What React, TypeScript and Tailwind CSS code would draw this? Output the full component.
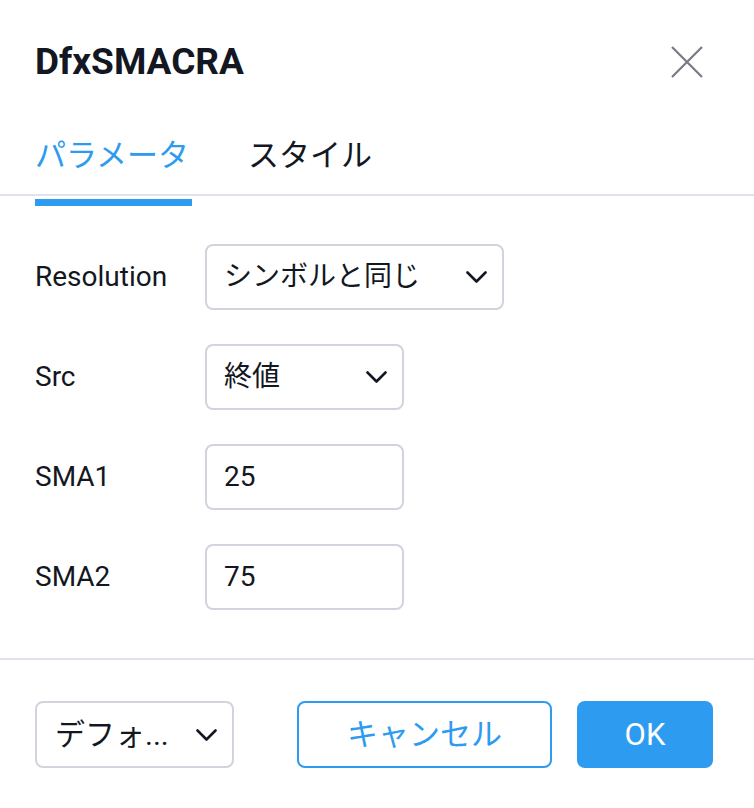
import { ReactNode } from 'react';

const FONT = "font-[family-name:Roboto,'Noto_Sans_CJK_JP',sans-serif]";

function Chevron() {
    return (
        <svg width="21" height="12" viewBox="0 0 21 12" fill="none" className="shrink-0">
            <path d="M1.5 1.5l9 9 9-9" stroke="#131722" strokeWidth="2.6" strokeLinecap="round" strokeLinejoin="round" />
        </svg>
    );
}

function SelectBox({ value, width }: { value: string; width: string }) {
    return (
        <div className={`${width} h-[66px] rounded-[8px] border-2 border-[#d1d4dc] flex items-center justify-between pl-[17px] pr-[15px]`}>
            <span className="text-[28px] text-[#131722] leading-normal whitespace-nowrap">{value}</span>
            <Chevron />
        </div>
    );
}

function InputBox({ value }: { value: string }) {
    return (
        <div className="w-[199px] h-[66px] rounded-[8px] border-2 border-[#d1d4dc] flex items-center pl-[17px]">
            <span className="text-[28px] text-[#131722] leading-normal">{value}</span>
        </div>
    );
}

function Row({ label, children }: { label: string; children: ReactNode }) {
    return (
        <div className="flex items-center">
            <div className="w-[170px] text-[28px] text-[#131722] leading-normal">{label}</div>
            {children}
        </div>
    );
}

export default function App() {
    return (
        <div className={`w-[754px] h-[808px] bg-white flex flex-col ${FONT}`}>
            {/* Header */}
            <div className="flex items-center justify-between pl-[35px] pr-[51px] pt-[43px]">
                <h1 className="text-[37px] font-bold text-[#131722] leading-none">DfxSMACRA</h1>
                <svg width="32" height="32" viewBox="0 0 32 32" fill="none">
                    <path d="M1 1l30 30M31 1L1 31" stroke="#787b86" strokeWidth="2.2" />
                </svg>
            </div>

            {/* Tabs */}
            <div className="flex gap-[59px] pl-[35px] mt-[60px] h-[54px]">
                <span className="text-[31px] leading-none text-[#2d9bf0]">パラメータ</span>
                <span className="text-[31px] leading-none text-[#131722]">スタイル</span>
            </div>
            <div className="h-[2px] bg-[#e0e3eb]" />
            <div className="ml-[35px] mt-[3px] w-[157px] h-[7px] bg-[#2d9bf0]" />

            {/* Params */}
            <div className="flex flex-col gap-[34px] px-[35px] pt-[38px] pb-[48px]">
                <Row label="Resolution">
                    <SelectBox value="シンボルと同じ" width="w-[299px]" />
                </Row>
                <Row label="Src">
                    <SelectBox value="終値" width="w-[199px]" />
                </Row>
                <Row label="SMA1">
                    <InputBox value="25" />
                </Row>
                <Row label="SMA2">
                    <InputBox value="75" />
                </Row>
            </div>

            <div className="h-[2px] bg-[#e0e3eb]" />

            {/* Footer */}
            <div className="flex items-center pl-[35px] pr-[41px] pt-[41px]">
                <div className="w-[199px] h-[67px] rounded-[8px] border-2 border-[#d1d4dc] flex items-center justify-between pl-[18px] pr-[15px]">
                    <span className="text-[30px] text-[#131722] leading-normal whitespace-nowrap">デフォ...</span>
                    <Chevron />
                </div>
                <div className="ml-auto flex gap-[25px]">
                    <button className="w-[255px] h-[67px] rounded-[8px] border-2 border-[#2d9bf0] text-[31px] text-[#2d9bf0] leading-none">
                        キャンセル
                    </button>
                    <button className="w-[136px] h-[67px] rounded-[8px] bg-[#2d9bf0] text-[31px] text-white leading-none">
                        OK
                    </button>
                </div>
            </div>
        </div>
    );
}
